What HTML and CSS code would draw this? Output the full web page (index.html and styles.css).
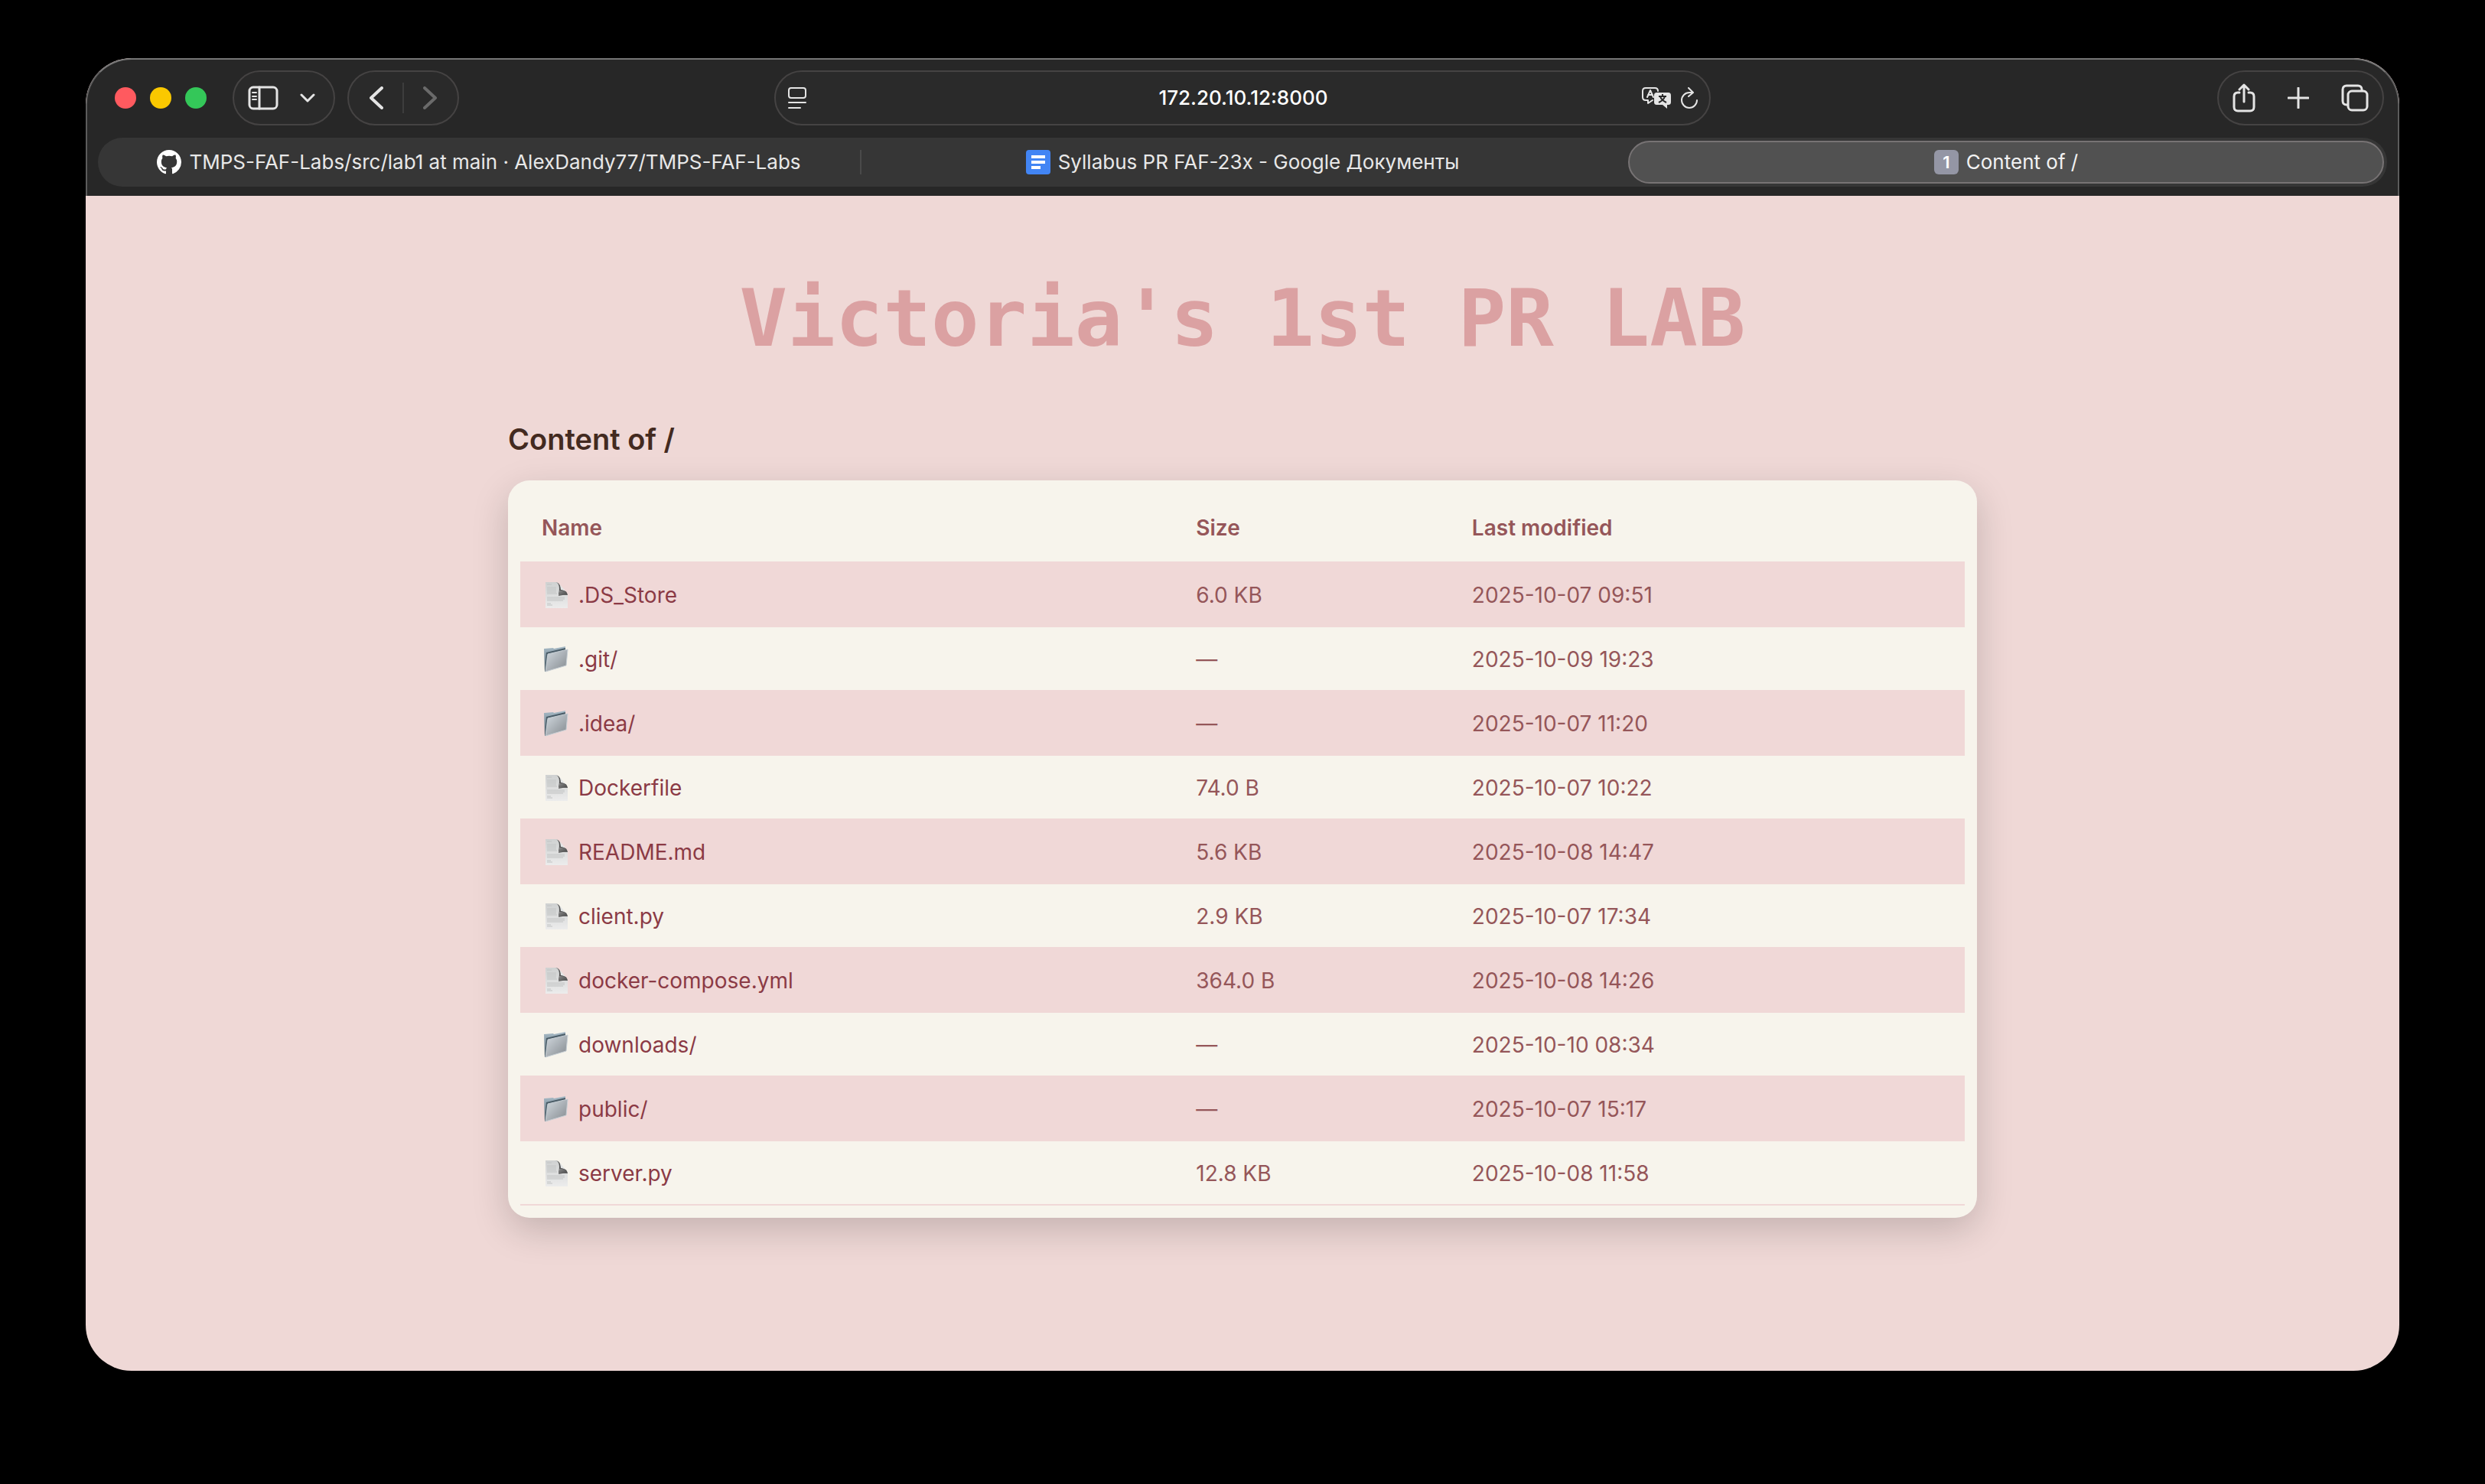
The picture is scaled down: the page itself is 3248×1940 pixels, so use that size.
FILE: index.html
```html
<!DOCTYPE html>
<html lang="en">
<head>
<meta charset="utf-8">
<title>Content of /</title>
<link rel="stylesheet" href="styles.css">
</head>
<body>
<svg class="defs" aria-hidden="true">
  <defs>
    <linearGradient id="paper" x1="0" y1="0" x2="0" y2="1"><stop offset="0" stop-color="#cfd1d1"/><stop offset="1" stop-color="#ececec"/></linearGradient>
    <linearGradient id="curl" x1="0" y1="0" x2="1" y2="1"><stop offset="0" stop-color="#8b8b8b"/><stop offset="1" stop-color="#444"/></linearGradient>
    <linearGradient id="front" x1="0" y1="0" x2="1" y2="1"><stop offset="0" stop-color="#d3dae0"/><stop offset="1" stop-color="#83898e"/></linearGradient>
    <linearGradient id="back" x1="0" y1="0" x2="0" y2="1"><stop offset="0" stop-color="#a9bcc8"/><stop offset="1" stop-color="#50616c"/></linearGradient>
  </defs>
  <symbol id="file" viewBox="0 0 36 36">
    <path d="M5 1h15l14 16v18H5z" fill="url(#paper)"/>
    <path d="M7 4h6M7 8h12M7 10h12M7 12h12M7 14h12M7 16h13M7 21h23M7 23h23M7 25h21M7 29h5M7 31h7" stroke="#c2c4c4" stroke-width="1" fill="none"/>
    <path d="M18 1c5 1 6 7 4 16l12 1c-1-5-4-7-9-7 0-6-2-9-7-10z" fill="#555"/>
    <path d="M22 2l11 13c-2-3-5-4-8-4 0-4-1-7-3-9z" fill="#e4e6e6"/>
    <path d="M23 12c5 0 9 1 10 5l-11 2z" fill="url(#curl)"/>
  </symbol>
  <symbol id="folder" viewBox="0 0 36 36">
    <path d="M3 4l12-1 1 1 15-3v4L6 34H4z" fill="url(#back)"/>
    <path d="M6 9l25-6v4L7 13 5 32H4z" fill="#4b5d68"/>
    <path d="M8 11l26-6-2 21L5 34z" fill="url(#front)" stroke="#c6ced4" stroke-width="1"/>
  </symbol>
</svg>

<div class="window">
  <header class="chrome">
    <div class="toolbar">
      <div class="side">
        <div class="lights"><span class="light red"></span><span class="light yellow"></span><span class="light green"></span></div>
        <div class="pill sidebar-pill">
          <button class="icon-button" aria-label="Sidebar"><svg width="40" height="32" viewBox="0 0 40 32"><g class="line"><rect x="2" y="2" width="36" height="28" rx="5"/><path d="M15 2v28"/><path d="M6 9h5M6 14h5M6 18h5" stroke-width="2"/></g></svg></button>
          <button class="icon-button" aria-label="Tab groups"><svg width="20" height="12" viewBox="0 0 20 12"><path class="line" d="M2 2l8 8 8-8"/></svg></button>
        </div>
        <div class="pill nav-pill">
          <button class="icon-button" aria-label="Back"><svg width="18" height="30" viewBox="0 0 18 30"><path class="line bold" d="M16 2L2 15l14 13"/></svg></button>
          <span class="rule"></span>
          <button class="icon-button dim" aria-label="Forward"><svg width="18" height="30" viewBox="0 0 18 30"><path class="line bold" d="M2 2l14 13L2 28"/></svg></button>
        </div>
      </div>
      <div class="pill address">
        <button class="icon-button" aria-label="Page menu"><svg width="24" height="28" viewBox="0 0 24 28"><g class="line thin"><rect x="1" y="1" width="22" height="13" rx="3"/><path d="M1 20h22M1 27h15"/></g></svg></button>
        <input class="url" aria-label="Address" value="172.20.10.12:8000">
        <div class="address-tools">
          <button class="icon-button" aria-label="Translate"><svg width="38" height="28" viewBox="0 0 38 28"><path class="line thin" d="M14 17l-6 4v-4H5c-3 0-4-1-4-4V5c0-3 1-4 4-4h12c3 0 4 1 4 4"/><path class="line thin" d="M7 13l4-9 4 9M8 10h6"/><path d="M20 7h14c3 0 4 1 4 4v8c0 3-1 4-4 4h-1v5l-6-5h-7c-3 0-4-1-4-4v-8c0-3 1-4 4-4z" fill="#e4e4e4"/><path d="M27 9v3M22 12h10M24 12c1 4 4 6 8 8M30 12c-1 4-4 6-8 8" fill="none" stroke="#292929" stroke-width="2"/></svg></button>
          <button class="icon-button" aria-label="Reload"><svg width="24" height="28" viewBox="0 0 24 28"><path class="line thin" d="M16 7h-4a10 10 0 1 0 10 10M11 1l6 6-6 5"/></svg></button>
        </div>
      </div>
      <div class="side end">
        <div class="pill actions">
          <button class="icon-button" aria-label="Share"><svg width="30" height="38" viewBox="0 0 30 38"><path class="line" d="M9 12H7c-4 0-5 2-5 5v14c0 3 2 5 5 5h16c3 0 5-2 5-5V17c0-3-1-5-5-5h-2M15 24V2M9 8l6-6 6 6"/></svg></button>
          <button class="icon-button" aria-label="New tab"><svg width="28" height="28" viewBox="0 0 28 28"><path class="line" d="M14 1v26M1 14h26"/></svg></button>
          <button class="icon-button" aria-label="Tab overview"><svg width="36" height="36" viewBox="0 0 36 36"><path class="line" d="M8 27H7c-3 0-5-2-5-5V7c0-3 2-5 5-5h15c3 0 5 2 5 5v1"/><rect class="line" x="9" y="9" width="25" height="25" rx="5"/></svg></button>
        </div>
      </div>
    </div>
    <nav class="tabs" aria-label="Tabs">
      <a class="tab" href="#"><svg width="32" height="32" viewBox="0 0 16 16"><path fill="#fff" d="M8 0C3.58 0 0 3.58 0 8c0 3.54 2.29 6.53 5.47 7.59.4.07.55-.17.55-.38 0-.19-.01-.82-.01-1.49-2.01.37-2.53-.49-2.69-.94-.09-.23-.48-.94-.82-1.13-.28-.15-.68-.52-.01-.53.63-.01 1.08.58 1.23.82.72 1.21 1.87.87 2.33.66.07-.52.28-.87.51-1.07-1.78-.2-3.64-.89-3.64-3.95 0-.87.31-1.59.82-2.15-.08-.2-.36-1.02.08-2.12 0 0 .67-.21 2.2.82.64-.18 1.32-.27 2-.27s1.36.09 2 .27c1.53-1.04 2.2-.82 2.2-.82.44 1.1.16 1.92.08 2.12.51.56.82 1.27.82 2.15 0 3.07-1.87 3.75-3.65 3.95.29.25.54.73.54 1.48 0 1.07-.01 1.93-.01 2.2 0 .21.15.46.55.38A8.01 8.01 0 0 0 16 8c0-4.42-3.58-8-8-8z"/></svg><span>TMPS-FAF-Labs/src/lab1 at main · AlexDandy77/TMPS-FAF-Labs</span></a>
      <span class="rule"></span>
      <a class="tab" href="#"><svg width="32" height="32" viewBox="0 0 32 32"><rect width="32" height="32" rx="4" fill="#4285f4"/><path d="M7 7h18v4H7zM7 14h18v4H7zM7 21h12v4H7z" fill="#fff"/></svg><span>Syllabus PR FAF-23x - Google Документы</span></a>
      <span class="rule hidden"></span>
      <a class="tab active" href="#" aria-current="page"><span class="badge">1</span><span>Content of /</span></a>
    </nav>
  </header>

  <main class="page">
    <h1 class="title">Victoria's 1st PR LAB</h1>
    <section class="listing">
      <h2 class="heading">Content of /</h2>
      <div class="card">
        <table class="files">
          <thead><tr><th class="name">Name</th><th class="size">Size</th><th>Last modified</th></tr></thead>
          <tbody>
            <tr><td><a href="#"><svg class="glyph"><use href="#file"/></svg>.DS_Store</a></td><td>6.0 KB</td><td>2025-10-07 09:51</td></tr>
            <tr><td><a href="#"><svg class="glyph"><use href="#folder"/></svg>.git/</a></td><td>—</td><td>2025-10-09 19:23</td></tr>
            <tr><td><a href="#"><svg class="glyph"><use href="#folder"/></svg>.idea/</a></td><td>—</td><td>2025-10-07 11:20</td></tr>
            <tr><td><a href="#"><svg class="glyph"><use href="#file"/></svg>Dockerfile</a></td><td>74.0 B</td><td>2025-10-07 10:22</td></tr>
            <tr><td><a href="#"><svg class="glyph"><use href="#file"/></svg>README.md</a></td><td>5.6 KB</td><td>2025-10-08 14:47</td></tr>
            <tr><td><a href="#"><svg class="glyph"><use href="#file"/></svg>client.py</a></td><td>2.9 KB</td><td>2025-10-07 17:34</td></tr>
            <tr><td><a href="#"><svg class="glyph"><use href="#file"/></svg>docker-compose.yml</a></td><td>364.0 B</td><td>2025-10-08 14:26</td></tr>
            <tr><td><a href="#"><svg class="glyph"><use href="#folder"/></svg>downloads/</a></td><td>—</td><td>2025-10-10 08:34</td></tr>
            <tr><td><a href="#"><svg class="glyph"><use href="#folder"/></svg>public/</a></td><td>—</td><td>2025-10-07 15:17</td></tr>
            <tr><td><a href="#"><svg class="glyph"><use href="#file"/></svg>server.py</a></td><td>12.8 KB</td><td>2025-10-08 11:58</td></tr>
          </tbody>
        </table>
      </div>
    </section>
  </main>
</div>
</body>
</html>
```
FILE: styles.css
```css
* {
  box-sizing: border-box;
}

html,
body {
  margin: 0;
  min-height: 100%;
}

body {
  background: #000;
  color: #955659;
  font-family: Inter, "Noto Sans", sans-serif;
  font-size: 28px;
  line-height: 36px;
  padding: 76px 112px 148px;
}

a {
  color: inherit;
  text-decoration: none;
}

.defs {
  position: absolute;
  width: 0;
  height: 0;
}

.window {
  border-radius: 60px;
  overflow: hidden;
  background: #efd8d6;
}

/* Browser chrome */

.chrome {
  background: #272727;
  border: 2px solid #5c5c5c;
  border-top-color: #757575;
  border-bottom: 0;
  border-radius: 60px 60px 0 0;
  padding: 14px 14px 12px;
  color: #e8e8e8;
  font-size: 26px;
  line-height: 32px;
}

.toolbar {
  display: flex;
  align-items: center;
  padding: 0 4px;
  margin-bottom: 16px;
}

.side {
  flex: 1 1 0;
  display: flex;
  align-items: center;
  gap: 16px;
}

.side.end {
  justify-content: flex-end;
}

.lights {
  display: flex;
  gap: 18px;
  padding: 0 18px;
}

.light {
  width: 28px;
  height: 28px;
  border-radius: 50%;
}

.red {
  background: #ff5a5f;
}

.yellow {
  background: #fac800;
}

.green {
  background: #34c759;
}

.pill {
  display: flex;
  align-items: center;
  justify-content: space-between;
  height: 72px;
  border: 2px solid #454343;
  border-radius: 36px;
  background: #2a2a2a;
}

.sidebar-pill {
  width: 134px;
  padding: 0 24px 0 18px;
}

.nav-pill {
  width: 146px;
  padding: 0 27px;
}

.address {
  width: 41%;
  padding: 0 14px 0 16px;
  gap: 16px;
}

.actions {
  width: 218px;
  padding: 0 18px;
}

.icon-button {
  display: flex;
  padding: 0;
  border: 0;
  background: none;
  color: #e4e4e4;
}

.icon-button.dim {
  color: #6a6a6a;
}

.line {
  fill: none;
  stroke: currentColor;
  stroke-width: 3;
  stroke-linecap: round;
  stroke-linejoin: round;
}

.line.thin {
  stroke-width: 2;
}

.line.bold {
  stroke-width: 4;
}

.address-tools {
  display: flex;
  gap: 12px;
}

.url {
  flex: 1;
  min-width: 0;
  padding: 0 0 0 50px;
  border: 0;
  background: none;
  color: #fff;
  font: inherit;
  font-weight: 500;
  text-align: center;
}

.rule {
  width: 2px;
  height: 40px;
  background: #3d3d3d;
}

.tabs {
  display: flex;
  align-items: center;
  gap: 4px;
  padding: 4px;
  border-radius: 32px;
  background: #363636;
}

.tabs .rule {
  height: 32px;
  background: #4a4a4a;
}

.tabs .rule.hidden {
  visibility: hidden;
}

.tab {
  flex: 1 1 0;
  display: flex;
  align-items: center;
  justify-content: center;
  gap: 10px;
  height: 56px;
  border: 2px solid transparent;
  border-radius: 28px;
  white-space: nowrap;
}

.tab.active {
  border-color: #777374;
  background: #515151;
  color: #f2f2f2;
}

.badge {
  width: 32px;
  height: 32px;
  border-radius: 6px;
  background: #9496a5;
  color: #fff;
  font-size: 22px;
  font-weight: 600;
  text-align: center;
}

/* Directory page */

.page {
  padding: 96px 24px 200px;
}

.title {
  margin: 0 0 70px;
  color: #dba1a2;
  font-family: "DejaVu Sans Mono", monospace;
  font-size: 104px;
  font-weight: 700;
  line-height: 128px;
  text-align: center;
}

.listing {
  max-width: 1920px;
  margin: 0 auto;
}

.heading {
  margin: 0 0 30px;
  color: #432a20;
  font-size: 38px;
  font-weight: 600;
  line-height: 48px;
}

.card {
  padding: 16px;
  border-radius: 28px;
  background: #f7f4ec;
  box-shadow: 0 16px 48px rgba(0, 0, 0, 0.18);
}

.files {
  width: 100%;
  table-layout: fixed;
  border-spacing: 0;
}

.files th,
.files td {
  padding: 24px 28px 22px;
  border-bottom: 2px solid #f0d8d7;
  text-align: left;
}

.files th {
  padding: 28px 28px 26px;
  font-weight: 600;
}

.files .name {
  width: 45.3%;
}

.files .size {
  width: 19.1%;
}

.files tbody tr:nth-child(odd) {
  background: #f0d8d7;
}

.files a {
  display: flex;
  align-items: center;
  gap: 12px;
  color: #8b3a45;
}

.glyph {
  width: 36px;
  height: 36px;
}
```
